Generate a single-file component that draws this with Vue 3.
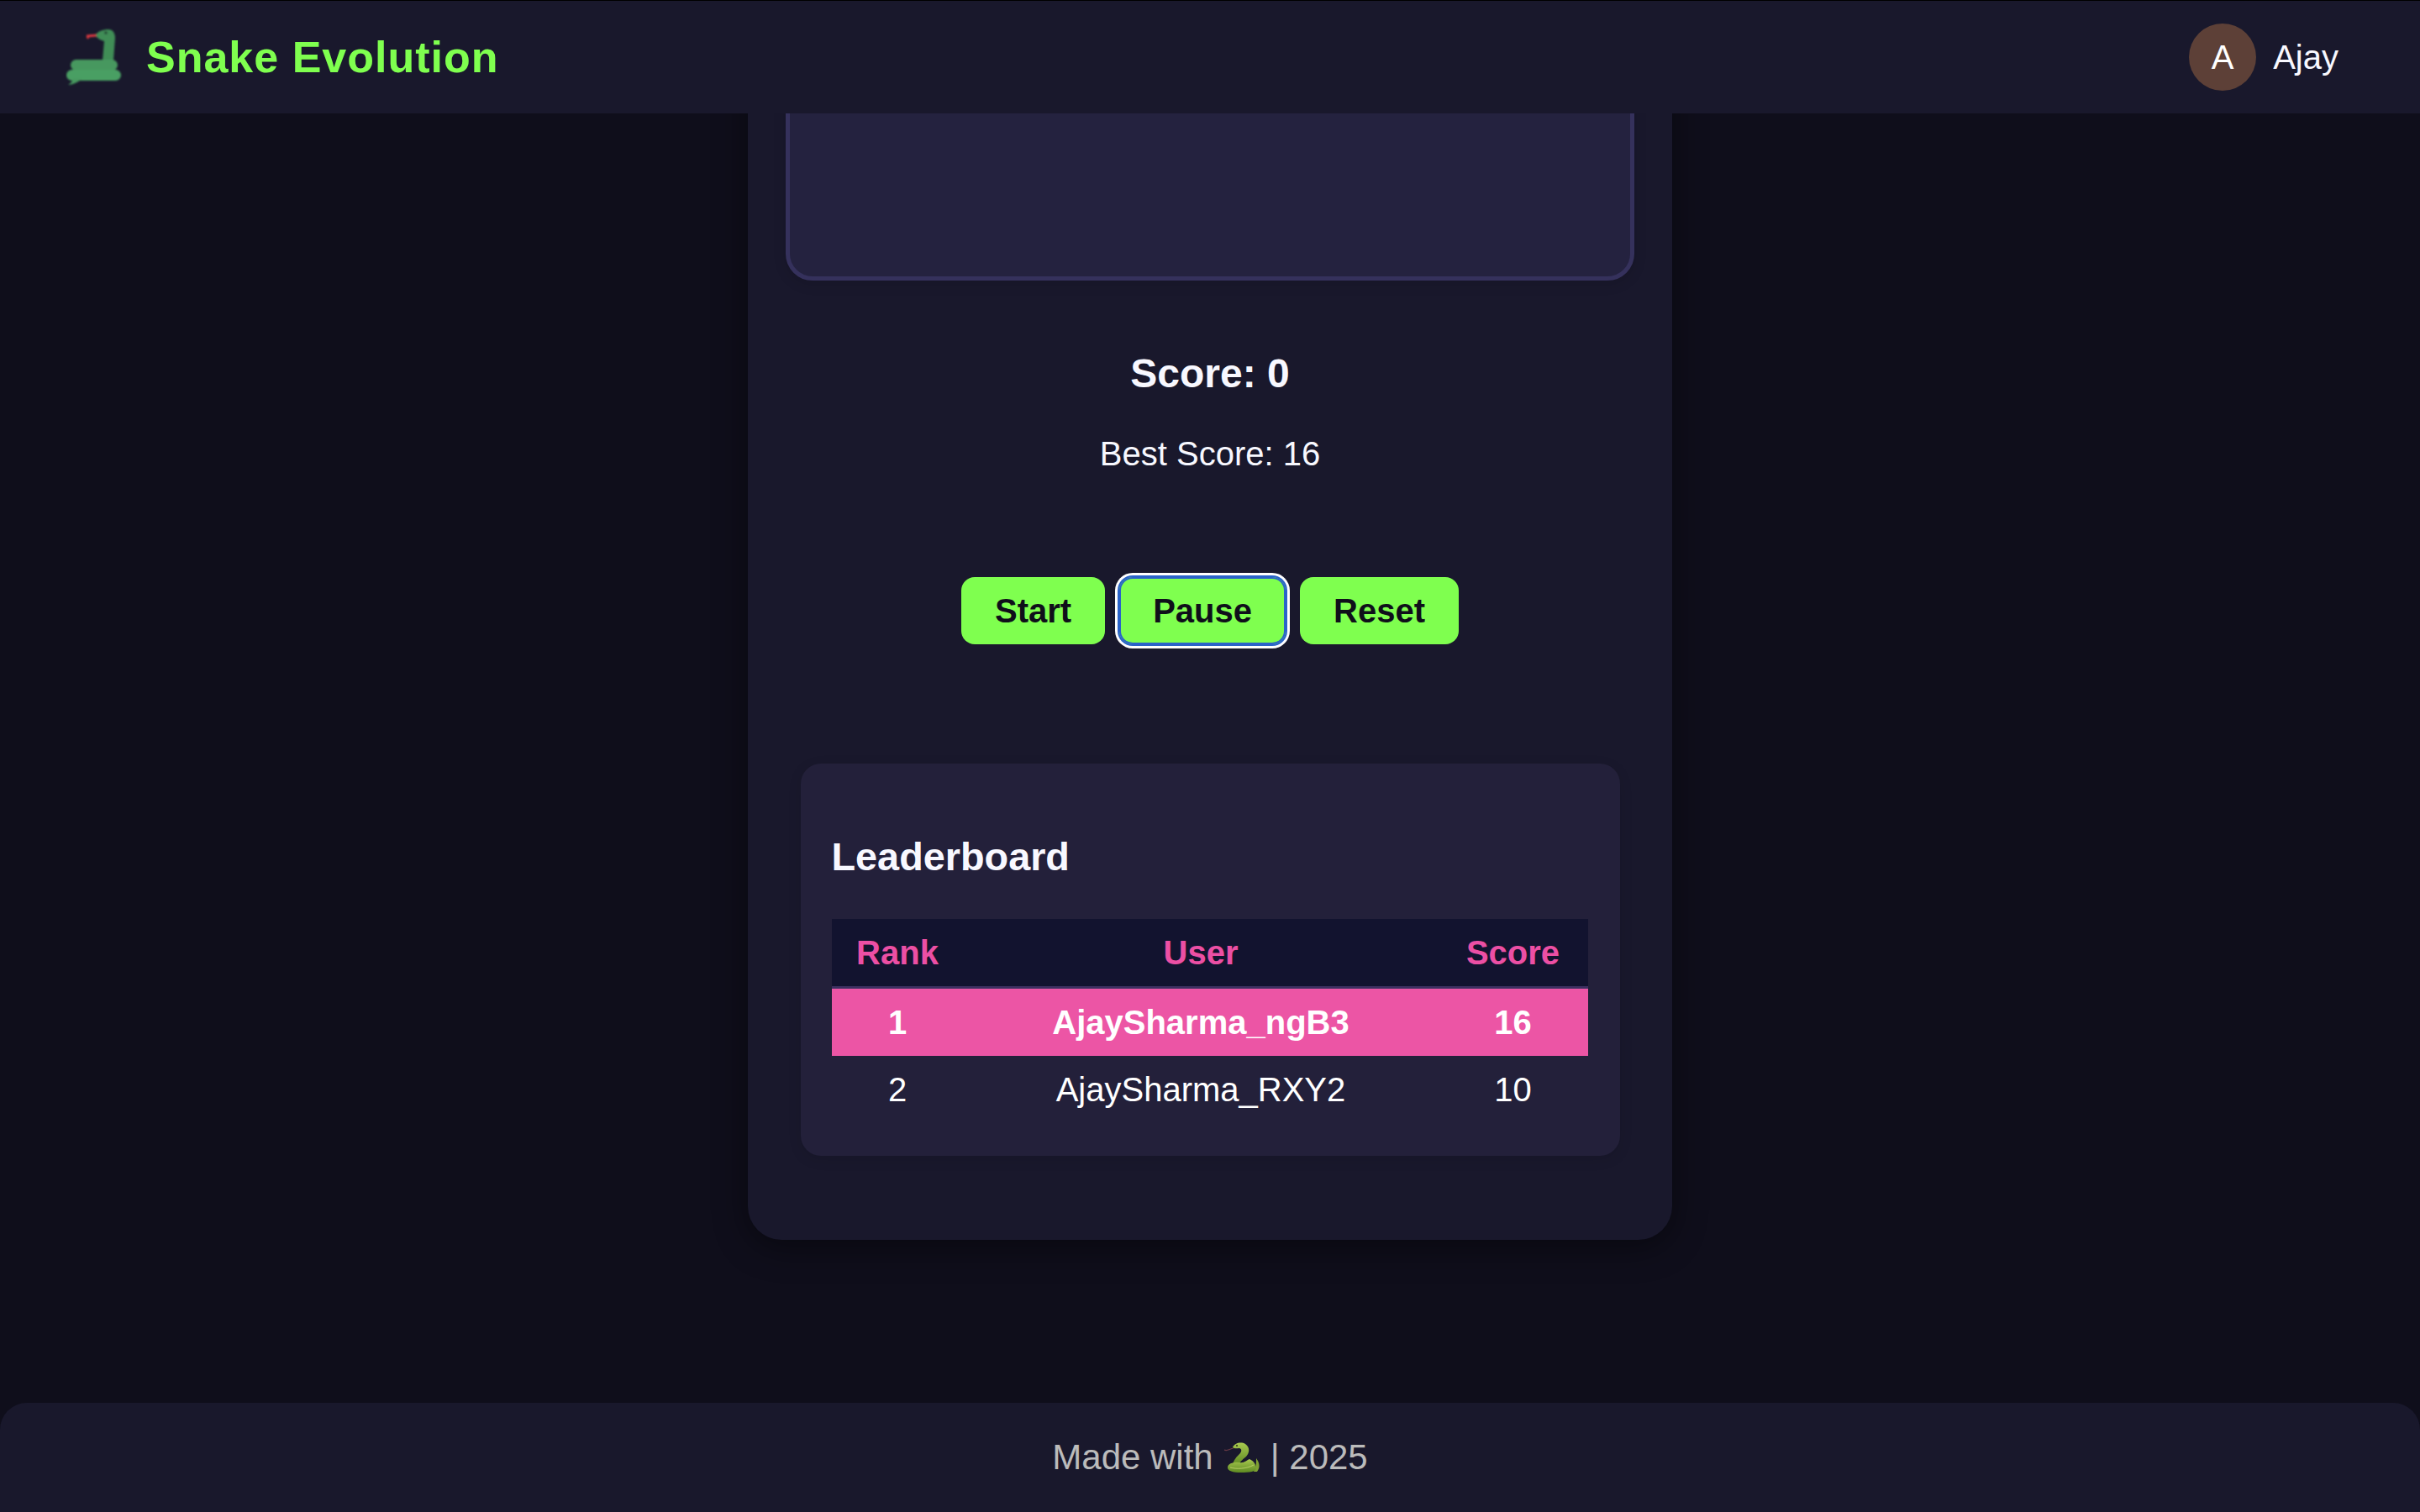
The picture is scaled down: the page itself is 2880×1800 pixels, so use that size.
<script setup>
const buttons = ["Start", "Pause", "Reset"];
const rows = [
  { rank: 1, user: "AjaySharma_ngB3", score: 16, me: true },
  { rank: 2, user: "AjaySharma_RXY2", score: 10, me: false },
];
</script>

<template>
  <div class="page">
    <header class="topbar">
      <div class="brand">
        <svg class="brand-icon" viewBox="0 0 70 72" aria-hidden="true">
          <defs>
            <filter id="soft" x="-10%" y="-10%" width="120%" height="120%">
              <feGaussianBlur stdDeviation="1.1" />
            </filter>
          </defs>
          <g filter="url(#soft)">
            <path d="M25 11 L38 10" stroke="#d8383f" stroke-width="3" fill="none" />
            <path d="M26 11 L27 14" stroke="#d8383f" stroke-width="2.5" fill="none" />
            <path d="M36 10 C38 5 45 3 51 3 C56 3 59 7 59 13 L57 40 L44 40 L46 17 C42 16 38 14 36 10 Z" fill="#3f8d56" />
            <rect x="6" y="39" width="56" height="13" rx="6.5" fill="#46985e" />
            <rect x="1" y="51" width="65" height="13" rx="6.5" fill="#4a9f63" />
            <path d="M20 62 C14 66 9 69 3 69 C6 67 8 65 9 62 Z" fill="#46985e" />
            <circle cx="48" cy="7" r="2" fill="#27503a" />
          </g>
        </svg>
        <span class="brand-name">Snake Evolution</span>
      </div>
      <div class="user">
        <div class="avatar">A</div>
        <span class="user-name">Ajay</span>
      </div>
    </header>

    <main class="content">
      <section class="game-card">
        <div class="board"></div>
        <div class="score">Score: 0</div>
        <div class="best">Best Score: 16</div>
        <div class="controls">
          <button
            v-for="label in buttons"
            :key="label"
            :class="['btn', { focused: label === 'Pause' }]"
          >
            {{ label }}
          </button>
        </div>
        <div class="leaderboard">
          <h2>Leaderboard</h2>
          <table>
            <colgroup>
              <col class="col-rank" />
              <col />
              <col class="col-score" />
            </colgroup>
            <thead>
              <tr>
                <th>Rank</th>
                <th>User</th>
                <th>Score</th>
              </tr>
            </thead>
            <tbody>
              <tr v-for="row in rows" :key="row.rank" :class="{ me: row.me }">
                <td>{{ row.rank }}</td>
                <td>{{ row.user }}</td>
                <td>{{ row.score }}</td>
              </tr>
            </tbody>
          </table>
        </div>
      </section>
    </main>

    <footer class="footer">
      <span>Made with</span>
      <svg class="footer-snake" viewBox="0 0 42 38" aria-hidden="true">
        <defs>
          <linearGradient id="body" x1="0" y1="0" x2="0" y2="1">
            <stop offset="0" stop-color="#a8c94f" />
            <stop offset="1" stop-color="#5e8a22" />
          </linearGradient>
        </defs>
        <path d="M0 10 C3 12 6 9 11 8" stroke="#6b3b45" stroke-width="1.2" fill="none" />
        <path d="M38 20 C42 25 43 31 39 36 L35 36 C38 31 38 26 38 20 Z" fill="#7ea033" />
        <path d="M10 7 C12 2 20 0 25 3 C31 7 30 14 26 18 C23 21 19 23 18 27 L10 28 C11 22 15 18 18 15 C21 12 21 9 18 8 C15 8 12 9 10 7 Z" fill="url(#body)" />
        <path d="M4 31 C4 26 12 24 18 25 C24 26 27 22 30 21 C35 23 38 28 38 32 C38 36 30 37 20 37 C10 37 4 35 4 31 Z" fill="url(#body)" />
        <path d="M7 31 C14 33 26 33 35 28" stroke="#d0e07a" stroke-width="1" fill="none" opacity="0.7" />
        <circle cx="15" cy="5" r="1" fill="#2d2a1a" />
      </svg>
      <span>| 2025</span>
    </footer>
  </div>
</template>

<style>
html,
body {
  margin: 0;
  background: #0f0e1b;
}
</style>

<style scoped>
.page {
  height: 100vh;
  display: flex;
  flex-direction: column;
  overflow: hidden;
  background: #0f0e1b;
  color: #f8f8ff;
  font-family: "Liberation Sans", Arial, sans-serif;
}

.topbar {
  box-sizing: border-box;
  height: 135px;
  flex: none;
  display: flex;
  align-items: center;
  justify-content: space-between;
  padding: 0 97px 0 78px;
  background: #19182c;
  border-top: 1px solid #000;
  position: relative;
  z-index: 2;
}

.brand {
  display: flex;
  align-items: center;
  gap: 26px;
}

.brand-icon {
  width: 70px;
  height: 72px;
  display: block;
}

.brand-name {
  color: #7fff4f;
  font-size: 52px;
  font-weight: 700;
  letter-spacing: 1px;
}

.user {
  display: flex;
  align-items: center;
  gap: 20px;
}

.avatar {
  width: 80px;
  height: 80px;
  border-radius: 50%;
  background: #5d4037;
  color: #fff;
  font-size: 40px;
  display: flex;
  align-items: center;
  justify-content: center;
}

.user-name {
  font-size: 40px;
}

.content {
  flex: 1;
  min-height: 0;
  display: flex;
  justify-content: center;
  align-items: flex-start;
}

.game-card {
  box-sizing: border-box;
  width: 1100px;
  flex: none;
  margin-top: -200px;
  padding: 40px 45px 100px;
  background: #19182c;
  border-radius: 40px;
  box-shadow: 0 8px 40px rgba(0, 0, 0, 0.45);
  display: flex;
  flex-direction: column;
  align-items: center;
}

.board {
  box-sizing: border-box;
  width: 1010px;
  height: 359px;
  background: #24223f;
  border: 5px solid #35315c;
  border-radius: 32px;
  box-shadow: 0 4px 16px rgba(0, 0, 0, 0.12);
}

.score {
  margin-top: 83px;
  font-size: 48px;
  font-weight: 700;
  line-height: 55px;
}

.best {
  margin-top: 45px;
  font-size: 40px;
  line-height: 46px;
}

.controls {
  margin-top: 124px;
  display: flex;
  gap: 17px;
}

.btn {
  height: 80px;
  padding: 0 40px;
  border: 0;
  border-radius: 16px;
  background: #7fff4f;
  color: #0f0f1a;
  font-family: inherit;
  font-size: 40px;
  font-weight: 700;
}

.btn.focused {
  box-shadow:
    inset 0 0 0 2px #2a62c9,
    0 0 0 2px #2a62c9,
    0 0 0 5px #fff;
}

.leaderboard {
  box-sizing: border-box;
  width: 975px;
  margin-top: 142px;
  padding: 84px 38px 39px 37px;
  background: #23203a;
  border-radius: 24px;
  box-shadow: 0 4px 16px rgba(0, 0, 0, 0.1);
}

h2 {
  margin: 0 0 46px;
  font-size: 46.8px;
  line-height: 55px;
  font-weight: 700;
}

table {
  width: 900px;
  table-layout: fixed;
  border-collapse: collapse;
  font-size: 40px;
  text-align: center;
}

.col-rank {
  width: 157px;
}

.col-score {
  width: 178px;
}

th,
td {
  padding: 17px 0;
  line-height: 46px;
}

th {
  background: #12132f;
  color: #ec4fa4;
  font-weight: 700;
  border-bottom: 3px solid #3d3060;
}

td {
  color: #fff;
}

tr.me td {
  background: #ec55a5;
  font-weight: 700;
}

.footer {
  box-sizing: border-box;
  height: 130px;
  flex: none;
  display: flex;
  align-items: center;
  justify-content: center;
  gap: 13px;
  background: #19182c;
  border-radius: 32px 32px 0 0;
  color: #bbb;
  font-size: 42px;
}

.footer-snake {
  width: 42px;
  height: 38px;
  display: block;
}
</style>
